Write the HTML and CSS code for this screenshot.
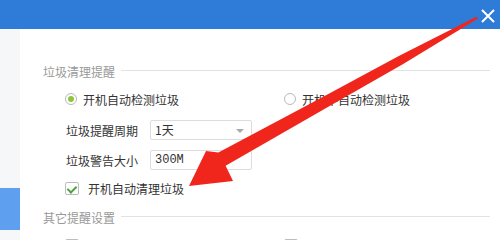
FILE: index.html
```html
<!DOCTYPE html>
<html lang="zh-CN">
<head>
    <meta charset="UTF-8">
    <title>提醒设置</title>
    <link rel="stylesheet" href="styles.css">
</head>
<body>
<div class="titlebar">
    <svg class="close" width="14" height="14" viewBox="0 0 14 14">
        <path d="M1 1L13 13M13 1L1 13" stroke="#fff" stroke-width="2" fill="none"/>
    </svg>
</div>

<div class="wrap">
    <div class="side">
        <div class="side-tab"></div>
    </div>

    <div class="main">
        <div class="group-title"><span>垃圾清理提醒</span></div>

        <div class="row pair first">
            <label class="opt"><i class="radio on"></i>开机自动检测垃圾</label>
            <label class="opt"><i class="radio"></i>开机不自动检测垃圾</label>
        </div>

        <div class="field f1">
            <span class="label">垃圾提醒周期</span>
            <div class="select">1天<i class="caret"></i></div>
        </div>

        <div class="field f2">
            <span class="label">垃圾警告大小</span>
            <div class="input">300M</div>
        </div>

        <div class="row check-row">
            <label class="opt"><i class="check on"></i>开机自动清理垃圾</label>
        </div>

        <div class="group-title g2"><span>其它提醒设置</span></div>

        <!--下面一行只露出复选框的上沿-->
        <div class="row pair last">
            <label class="opt"><i class="check"></i></label>
            <label class="opt"><i class="check"></i></label>
        </div>
    </div>
</div>

<!--红色箭头盖在内容上面-->
<svg class="arrow" width="500" height="240" viewBox="0 0 500 240">
    <polygon fill="#f0261c" points="189,186 206,151 218.4,152.5 326,95.3 398.8,56.1 476.3,16.8 478,18.6 403.2,63.9 331.4,104.9 225.6,165.7 233,181"/>
</svg>
</body>
</html>
```

FILE: styles.css
```css
* {
    margin: 0;
    padding: 0;
    box-sizing: border-box;
}

body {
    width: 500px;
    height: 240px;
    overflow: hidden;
    position: relative;
    background: #fff;
    font-family: "Noto Sans CJK SC", "Microsoft YaHei", sans-serif;
    font-size: 12px;
    color: #333;
}

.titlebar {
    height: 29px;
    background: #2e7bd8;
    display: flex;
    justify-content: flex-end;
    align-items: center;
    padding-right: 5px;
}

.close {
    display: block;
    margin-top: 2px;
}

.wrap {
    display: flex;
    height: 211px;
    overflow: hidden;
}

.side {
    width: 20px;
    flex-shrink: 0;
    background: #f6f7f8;
    padding-top: 159px;
}

.side-tab {
    height: 42px;
    background: #5f9ff0;
}

.main {
    flex: 1;
    min-width: 0;
    padding: 35px 10px 0 23px;
}

.group-title {
    display: flex;
    align-items: center;
    height: 16px;
    line-height: 16px;
    color: #999;
}

.group-title:after {
    content: "";
    flex: 1;
    height: 1px;
    background: #e2e2e2;
    margin-left: 6px;
    margin-top: -3px;
}

.row {
    display: flex;
    height: 20px;
    align-items: center;
    padding-left: 22px;
}

.pair .opt {
    width: 219px;
    flex-shrink: 0;
}

.first {
    margin-top: 9px;
}

.opt {
    display: flex;
    align-items: center;
}

.radio {
    width: 12px;
    height: 12px;
    border: 1px solid #b9b9b9;
    border-radius: 50%;
    margin-right: 6px;
    display: flex;
    align-items: center;
    justify-content: center;
}

.radio.on:after {
    content: "";
    width: 6px;
    height: 6px;
    border-radius: 50%;
    background: #8cc63e;
}

.check {
    width: 14px;
    height: 13px;
    border: 1px solid #bdbdbd;
    border-radius: 2px;
    margin-right: 9px;
    position: relative;
}

.check.on:after {
    content: "";
    position: absolute;
    left: 3px;
    top: 1px;
    width: 4px;
    height: 7px;
    border: solid #4fa03a;
    border-width: 0 2px 2px 0;
    transform: rotate(45deg);
}

.field {
    display: flex;
    align-items: center;
    height: 20px;
    padding-left: 23px;
}

.f1 {
    margin-top: 11px;
}

.f2 {
    margin-top: 10px;
}

.label {
    width: 84px;
}

.select,
.input {
    width: 102px;
    height: 20px;
    border: 1px solid #dcdcdc;
    border-radius: 2px;
    padding-left: 4px;
    line-height: 18px;
    font-family: "Liberation Mono", "Noto Sans CJK SC", monospace;
    font-size: 12px;
    position: relative;
}

.select {
    font-family: "Noto Sans CJK SC", sans-serif;
}

.caret {
    position: absolute;
    right: 7px;
    top: 8px;
    border-left: 4px solid transparent;
    border-right: 4px solid transparent;
    border-top: 4px solid #aaa;
}

.check-row {
    margin-top: 8px;
}

.g2 {
    margin-top: 12px;
}

.last {
    margin-top: 9px;
}

.arrow {
    position: absolute;
    left: 0;
    top: 0;
}
```
